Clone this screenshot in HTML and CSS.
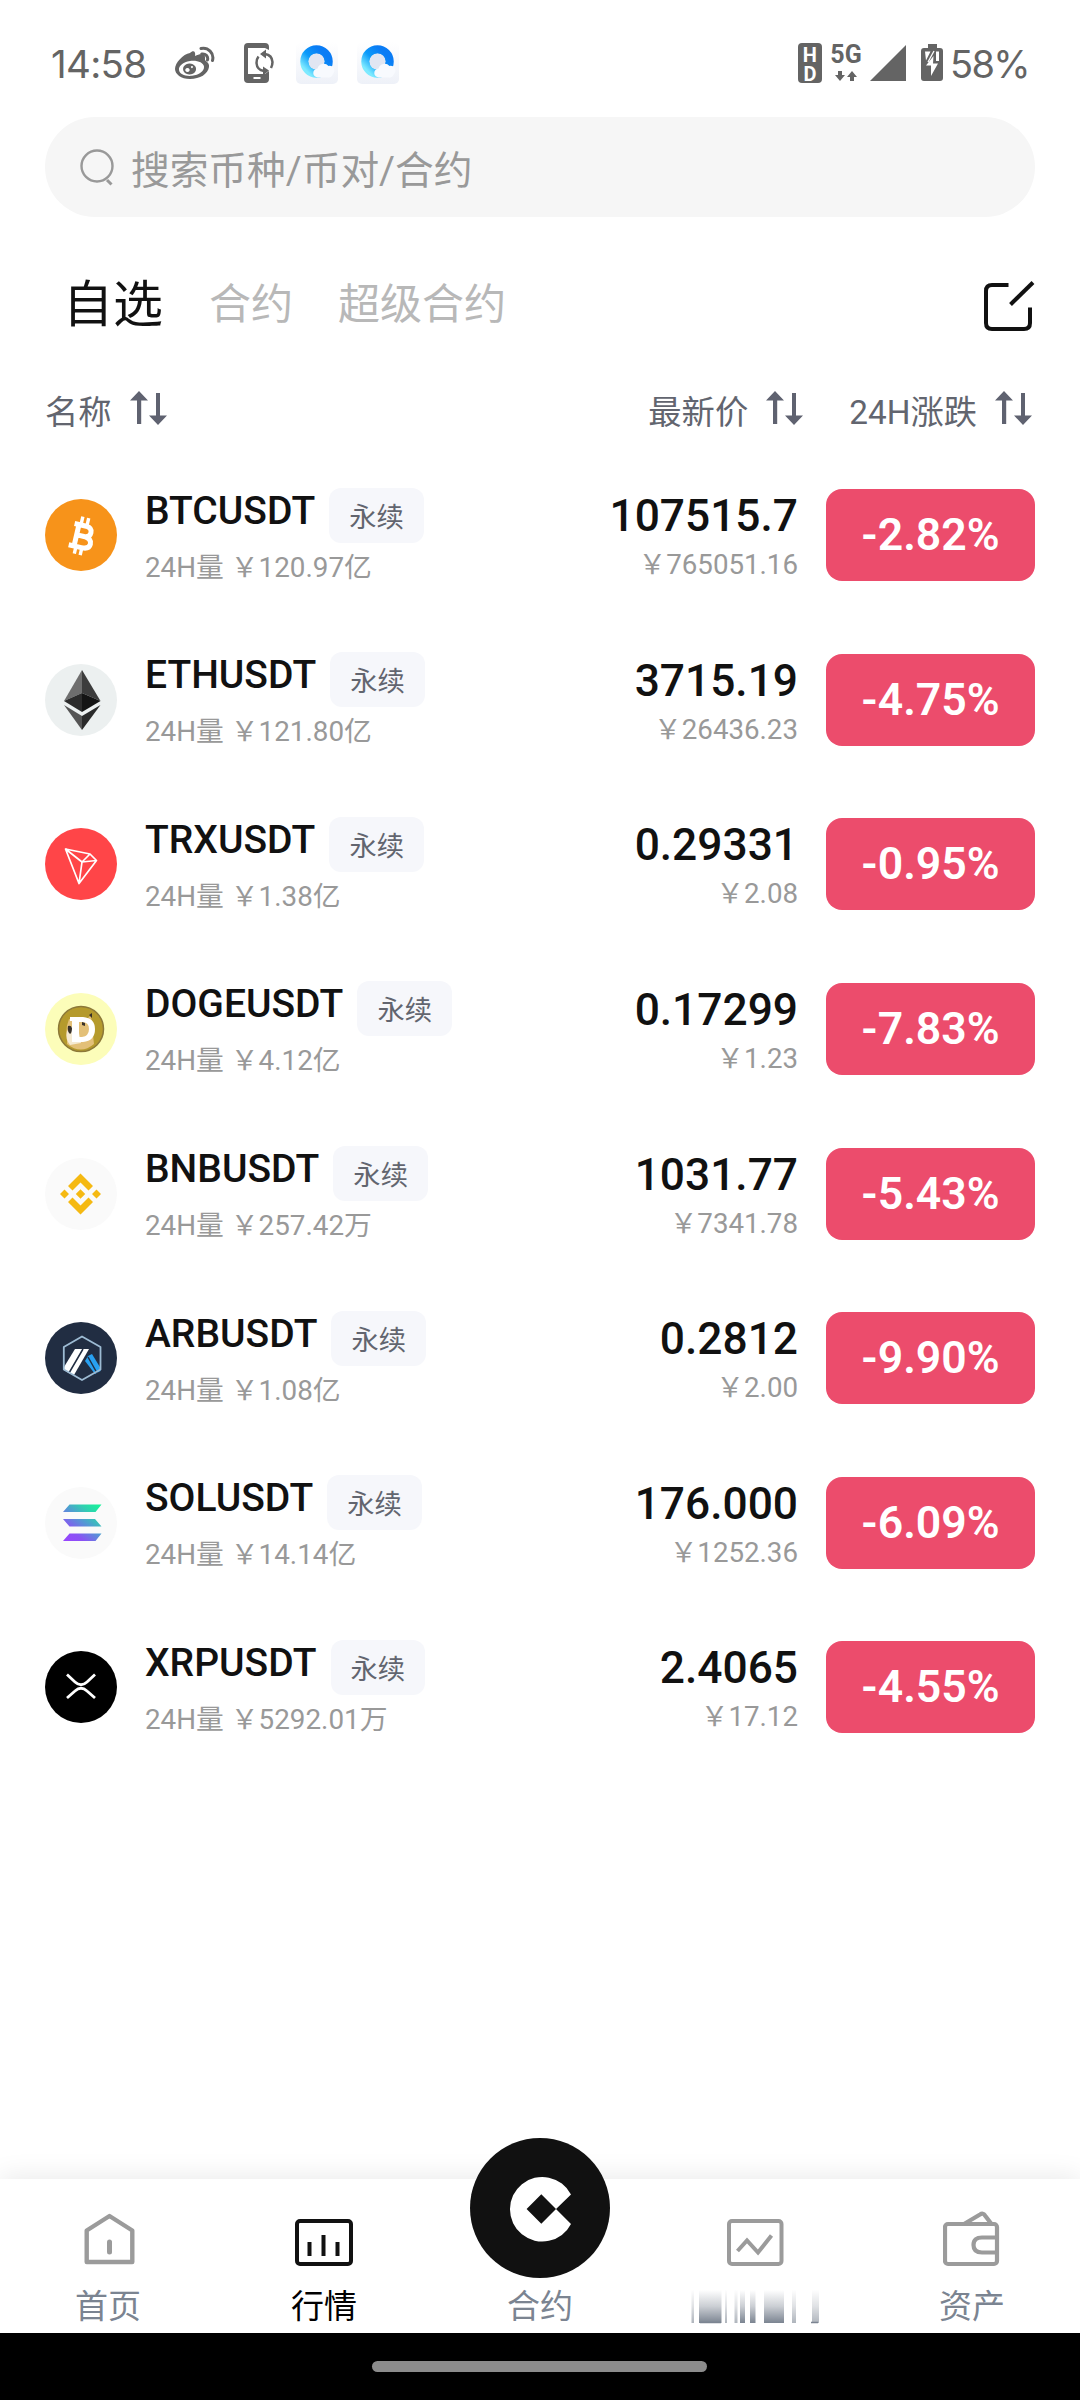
FILE: index.html
```html
<!DOCTYPE html>
<html lang="zh-CN">
<head>
<meta charset="utf-8">
<title>行情</title>
<link rel="stylesheet" href="styles.css">
</head>
<body>
<svg class="defs" width="0" height="0">
  <symbol id="sort" viewBox="0 0 37 34">
    <path fill="#5f6270" d="M9 0L18 9.5H11.2V33H7V9.500H0zM28 34L19 24.500H26V2H30V24.500H37z"/>
  </symbol>
  <symbol id="browser" viewBox="0 0 42 42">
    <rect width="42" height="42" rx="5" fill="url(#tile)"/>
    <circle cx="20.500" cy="19.500" r="12" fill="none" stroke="url(#ring)" stroke-width="8.500"/>
    <circle cx="20.500" cy="19.500" r="8" fill="#e1e6f2"/>
    <path d="M22 35.500a4.500 4.500 0 0 1-.5-9a6.500 6.500 0 0 1 11-2.500a4.800 4.800 0 0 1 4.500 8q-1.500 3.500-4.500 3.500z" fill="#f8fafe"/>
  </symbol>
  <linearGradient id="tile" x1="0" y1="0" x2="0" y2="1"><stop offset="0" stop-color="#fff"/><stop offset="1" stop-color="#eef1f8"/></linearGradient>
  <linearGradient id="ring" x1="0.800" y1="0.200" x2="0.100" y2="0.900"><stop offset="0" stop-color="#0a7cf5"/><stop offset="0.500" stop-color="#0b9bfa"/><stop offset="1" stop-color="#7eeaff"/></linearGradient>
</svg>
<div class="screen">
  <header class="status">
    <span class="clock">14:58</span>
    <svg class="weibo" width="41" height="34" viewBox="0 0 41 34">
      <path fill="#646464" fill-rule="evenodd" d="M15 7C18 4 21 5 20 10C26 7 31 8 30 13C29 15 35 16 34 21C33 28 25 33 15 33C6 33 0 28 0 23C0 17 8 8 15 7zM15 15C8 16 3.500 20 4 24C4.500 28 10 30.500 17 29.800C24 29 29.500 25 29 20.500C28.500 16.500 22 14 15 15z"/>
      <path fill="#646464" fill-rule="evenodd" d="M14.500 17.500a6.500 5.500 0 1 0 .1 0zM12.500 22a2.200 2 0 1 1-.1 0zM17 20a1 1 0 1 1-.1 0z"/>
      <path d="M26 2.500C33 1 39.500 7 37.500 14.500M26.800 8C30.500 7.500 33.500 10 32.500 14" fill="none" stroke="#646464" stroke-width="3" stroke-linecap="round"/>
    </svg>
    <svg class="rotate" width="31" height="40" viewBox="0 0 31 40">
      <path fill="#646464" d="M4 0H21Q25 0 25 4V7L21 5H4V31H21L25 28V36Q25 40 21 40H4Q0 40 0 36V4Q0 0 4 0z"/>
      <path d="M9.500 35h7" stroke="#fff" stroke-width="2"/>
      <path d="M21 11Q28 12 28.500 19Q28.500 22 27 25M20 28Q13 27 12.500 20Q12.500 16 14.500 13.500" fill="none" stroke="#646464" stroke-width="2.500"/>
      <path fill="#646464" d="M16 11L22 6.500V15.500zM25 27.500L19 23.500V32.500z"/>
    </svg>
    <svg class="browser" width="42" height="42"><use href="#browser"/></svg>
    <svg class="browser" width="42" height="42"><use href="#browser"/></svg>
    <span class="spacer"></span>
    <span class="hd">HD</span>
    <div class="net">
      <span class="net-label">5G</span>
      <svg width="22" height="10" viewBox="0 0 22 10"><path fill="#646464" d="M3 0H7V4H10L5 10L0 4H3zM15 10H19V6H22L17 0L12 6H15z"/></svg>
    </div>
    <svg class="signal" width="36" height="36" viewBox="0 0 36 36"><path fill="#646464" d="M36 0V36H0z"/></svg>
    <svg class="battery" width="22" height="37" viewBox="0 0 22 37">
      <path fill="#646464" d="M7 0H16V4H19Q22 4 22 7V34Q22 37 19 37H3Q0 37 0 34V7Q0 4 3 4H7z"/>
      <path fill="#fff" d="M4 7.500H9.500L5 16.500zM15 7.500H18V17H15zM12.500 12L5 21.500H10V32L17 19.500H12z"/>
      <path d="M13 7L7 18" stroke="#fff" stroke-width="1.300"/>
    </svg>
    <span class="charge">58%</span>
  </header>

  <div class="search">
    <svg width="35" height="37" viewBox="0 0 35 37" fill="none" stroke="#999" stroke-width="2.400"><circle cx="17" cy="17" r="15.500"/><path d="M27 31L31.500 35.500" stroke-width="3"/></svg>
    <span>搜索币种/币对/合约</span>
  </div>

  <nav class="tabs">
    <span class="tab tab-on">自选</span>
    <span class="tab">合约</span>
    <span class="tab">超级合约</span>
    <span class="spacer"></span>
    <svg class="edit" width="51" height="51" viewBox="0 0 51 51" fill="none" stroke="#111" stroke-width="4"><path d="M24.500 4H8Q2 4 2 10V42Q2 48 8 48H40Q46 48 46 42V26.500"/><path d="M26.500 23.500L49 1.500"/></svg>
  </nav>

  <div class="columns">
    <div class="col"><span>名称</span><svg width="37" height="34"><use href="#sort"/></svg></div>
    <span class="spacer"></span>
    <div class="col"><span>最新价</span><svg width="37" height="34"><use href="#sort"/></svg></div>
    <div class="col col-change"><span>24H涨跌</span><svg width="37" height="34"><use href="#sort"/></svg></div>
  </div>

  <main class="list">
    <div class="row">
      <svg class="coin" viewBox="0 0 72 72"><circle cx="36" cy="36" r="36" fill="#f7931a"/>
        <g transform="rotate(13 37 37)" fill="none" stroke="#fff"><path stroke-width="5" d="M31.500 24V51M27 26.500H39Q45 27 45 31.800Q45 36.800 39 37H32M39 37Q47 37.500 47 43Q47 48.500 39 48.500H26"/><path stroke-width="3.400" d="M33.500 18V26M39.500 18V26M33.500 48V56M39.500 48V56"/></g>
      </svg>
      <div class="info"><div class="pair"><b>BTCUSDT</b><i>永续</i></div><p>24H量 ￥120.97亿</p></div>
      <div class="price"><b>107515.7</b><p>￥765051.16</p></div>
      <div class="change">-2.82%</div>
    </div>
    <div class="row">
      <svg class="coin" viewBox="0 0 72 72"><circle cx="36" cy="36" r="36" fill="#ecf0f0"/>
        <path fill="#6e6e6e" d="M37 6L19 37L37 29z"/><path fill="#3c3c3c" d="M37 6L55.500 37L37 29z"/><path fill="#2c2c2c" d="M19 37L37 29V48z"/><path fill="#141414" d="M55.500 37L37 29V48z"/><path fill="#555" d="M19 41L37 52V66z"/><path fill="#2a2a2a" d="M55.500 41L37 52V66z"/>
      </svg>
      <div class="info"><div class="pair"><b>ETHUSDT</b><i>永续</i></div><p>24H量 ￥121.80亿</p></div>
      <div class="price"><b>3715.19</b><p>￥26436.23</p></div>
      <div class="change">-4.75%</div>
    </div>
    <div class="row">
      <svg class="coin" viewBox="0 0 72 72"><circle cx="36" cy="36" r="36" fill="#ff4548"/>
        <path fill="none" stroke="#fff" stroke-width="1.700" stroke-linejoin="round" d="M20.500 21L45 26L51.500 32.500L34 55.500zL37 34L34 55.500M37 34L51.500 32.500M37 34L45 26"/>
      </svg>
      <div class="info"><div class="pair"><b>TRXUSDT</b><i>永续</i></div><p>24H量 ￥1.38亿</p></div>
      <div class="price"><b>0.29331</b><p>￥2.08</p></div>
      <div class="change">-0.95%</div>
    </div>
    <div class="row">
      <svg class="coin" viewBox="0 0 72 72"><circle cx="36" cy="36" r="36" fill="#fcfdb9"/>
        <circle cx="36" cy="36" r="22.500" fill="#b59a2c" stroke="#8c7838" stroke-width="1.500"/>
        <path fill="#e3c078" d="M22 47Q20 36 24 26L30 28L42 26L46 22L48 42L49 51Q36 62 22 51z"/>
        <path fill="#f5ead2" d="M22 38Q30 31 34 40L36 50L25 52Q20 46 22 38z"/>
        <path fill="#fff" fill-rule="evenodd" d="M25 24H38Q50 25 50 36Q50 48 38 49H27V39H24V34H27V28H25zM34 29V44H37Q44 43 44 36Q44 29 37 29z"/>
        <path fill="#e3c078" d="M37 30Q43 31 43 36Q43 42 37 43z"/>
        <path fill="#383129" d="M23 33Q26 32 27 35Q27 40 25 41Q22 39 23 33zM37 29l3 1v3l-3-1zM44 22l3-2v5z"/>
      </svg>
      <div class="info"><div class="pair"><b>DOGEUSDT</b><i>永续</i></div><p>24H量 ￥4.12亿</p></div>
      <div class="price"><b>0.17299</b><p>￥1.23</p></div>
      <div class="change">-7.83%</div>
    </div>
    <div class="row">
      <svg class="coin" viewBox="0 0 72 72"><circle cx="36" cy="36" r="36" fill="#fafafa"/>
        <path fill="#f5b912" d="M35.500 15.500L48 28L43.500 32.500L35.500 24.500L27.500 32.500L23 28zM35.500 56.500L48 44L43.500 39.500L35.500 47.500L27.500 39.500L23 44zM35.500 31.300L40.200 36L35.500 40.700L30.800 36zM19.500 31.500L24 36L19.500 40.500L15 36zM51.500 31.500L56 36L51.500 40.500L47 36z"/>
      </svg>
      <div class="info"><div class="pair"><b>BNBUSDT</b><i>永续</i></div><p>24H量 ￥257.42万</p></div>
      <div class="price"><b>1031.77</b><p>￥7341.78</p></div>
      <div class="change">-5.43%</div>
    </div>
    <div class="row">
      <svg class="coin" viewBox="0 0 72 72"><circle cx="36" cy="36" r="36" fill="#212d42"/>
        <path fill="#28a0f0" d="M43 34L47 32L55.500 46V49L50 52L40 39z"/>
        <path fill="#fff" d="M30 27H44L29 53L24.500 51.500L19 48V45z"/>
        <path d="M38 27L24 51M43 35L52 51" stroke="#212d42" stroke-width="1.500"/>
        <path fill="none" stroke="#9dbbd3" stroke-width="1.800" stroke-linejoin="round" d="M37 14.500L55.500 25V47.500L37 58L18.800 47.500V25z"/>
      </svg>
      <div class="info"><div class="pair"><b>ARBUSDT</b><i>永续</i></div><p>24H量 ￥1.08亿</p></div>
      <div class="price"><b>0.2812</b><p>￥2.00</p></div>
      <div class="change">-9.90%</div>
    </div>
    <div class="row">
      <svg class="coin" viewBox="0 0 72 72"><circle cx="36" cy="36" r="36" fill="#fafafa"/>
        <linearGradient id="sol" gradientUnits="userSpaceOnUse" x1="22" y1="56" x2="52" y2="18"><stop offset="0" stop-color="#9945ff"/><stop offset="0.250" stop-color="#8a52f4"/><stop offset="0.550" stop-color="#5497d5"/><stop offset="0.800" stop-color="#2fd0b0"/><stop offset="1" stop-color="#19f09b"/></linearGradient>
        <path fill="url(#sol)" d="M24.500 17.500H56.500L50.500 25H18zM18 32H50L56.500 39.500H24.500zM24.500 46.500H56.500L50.500 54H18z"/>
      </svg>
      <div class="info"><div class="pair"><b>SOLUSDT</b><i>永续</i></div><p>24H量 ￥14.14亿</p></div>
      <div class="price"><b>176.000</b><p>￥1252.36</p></div>
      <div class="change">-6.09%</div>
    </div>
    <div class="row">
      <svg class="coin" viewBox="0 0 72 72"><circle cx="36" cy="36" r="36" fill="#000"/>
        <path fill="none" stroke="#fff" stroke-width="2.800" d="M22 23.500L30 31Q36 36.500 42 31L50 23.500M22 47L30 40Q36 34.500 42 40L50 47"/>
      </svg>
      <div class="info"><div class="pair"><b>XRPUSDT</b><i>永续</i></div><p>24H量 ￥5292.01万</p></div>
      <div class="price"><b>2.4065</b><p>￥17.12</p></div>
      <div class="change">-4.55%</div>
    </div>
  </main>

  <footer class="tabbar">
    <div class="item">
      <svg width="58" height="60" viewBox="0 0 58 60" fill="none" stroke="#9b9b9b" stroke-width="4.400" stroke-linejoin="round"><path d="M7.700 20.500L30.500 6L53.300 20.500V52H7.700z"/><path d="M30.500 32V42" stroke-width="5" stroke-linecap="round"/></svg>
      <span>首页</span>
    </div>
    <div class="item item-on">
      <svg width="58" height="60" viewBox="0 0 58 60" fill="none" stroke="#111" stroke-width="4"><rect x="2" y="11" width="54" height="43" rx="3"/><path d="M14.500 32V46M28.500 25V46M42.500 32V46"/></svg>
      <span>行情</span>
    </div>
    <div class="item item-main">
      <svg width="140" height="140" viewBox="0 0 140 140"><circle cx="70" cy="70" r="70" fill="#111"/>
        <path fill="#fff" fill-rule="evenodd" d="M101 56.500A32.300 32.300 0 1 0 101 86L86 71zM71.300 56.300L86 71L71.300 85.700L56.600 71z"/>
      </svg>
      <span>合约</span>
    </div>
    <div class="item">
      <svg width="58" height="60" viewBox="0 0 58 60" fill="none" stroke="#9b9b9b" stroke-width="4"><rect x="2" y="11" width="52.500" height="43" rx="3"/><path d="M10.500 41L20 30.500L31 42.500L44.500 25.500"/></svg>
      <svg class="smear" width="132" height="48" viewBox="0 0 132 48">
        <linearGradient id="fade" x1="0" y1="0" x2="0" y2="1"><stop offset="0" stop-color="#7b8491" stop-opacity="0"/><stop offset="0.500" stop-color="#7b8491" stop-opacity=".4"/><stop offset="1" stop-color="#7b8491"/></linearGradient>
        <g fill="url(#fade)"><rect x="9" y="8" width="22.500" height="33"/><rect x="74" y="8" width="20" height="33"/><rect x="50" y="8" width="5" height="33"/><rect x="60" y="8" width="5.500" height="33"/></g>
        <g fill="url(#fade)" opacity=".6"><rect x="1.500" y="8" width="2.500" height="33"/><rect x="35" y="8" width="2" height="33"/><rect x="44.500" y="8" width="3" height="33"/><rect x="102" y="8" width="4" height="33"/><rect x="122" y="8" width="7" height="33"/></g>
        <path d="M10 40.500H31M121 40.500H128" stroke="#7b8491" stroke-width="1.500"/>
      </svg>
    </div>
    <div class="item">
      <svg width="58" height="60" viewBox="0 0 58 60" fill="none" stroke="#9b9b9b" stroke-width="4.200"><rect x="2" y="14" width="52" height="40" rx="3"/><path d="M21 14L37 4.500Q40 2.500 42 5.500L48.500 14M54 27.500H39Q30.500 27.500 30.500 35Q30.500 42.500 39 42.500H54"/></svg>
      <span>资产</span>
    </div>
  </footer>
  <div class="gesture"><div class="pill"></div></div>
</div>
</body>
</html>
```
FILE: styles.css
```css
* { box-sizing: border-box; }
body { margin: 0; background: #fff; font-family: Roboto, "Noto Sans CJK SC", sans-serif; color: #111; }
p { margin: 0; }
b { font-weight: 500; }
i { font-style: normal; }
svg { display: block; flex: none; }
.defs { position: absolute; }
.screen { width: 1080px; height: 2400px; display: flex; flex-direction: column; overflow: hidden; }
.spacer { flex: 1; }

.status { height: 117px; padding: 8px 53px 0 51px; display: flex; align-items: center; color: #646464; font-family: Inter, sans-serif; }
.clock { width: 124px; font-size: 38.500px; line-height: 46px; letter-spacing: -0.700px; padding-top: 2px; white-space: nowrap; }
.rotate { margin-left: 28px; }
.browser { margin-left: 21px; }
.browser + .browser { margin-left: 19px; }
.hd { width: 24px; height: 40px; padding-top: 0; border-radius: 4px; background: #646464; color: #fff; font: 700 20px/24px Roboto, sans-serif; writing-mode: vertical-rl; text-orientation: upright; letter-spacing: -5.500px; white-space: nowrap; }
.net { width: 32px; height: 36px; margin-left: 8px; display: flex; flex-direction: column; align-items: center; justify-content: space-between; }
.net-label { font: 700 25px/19px Roboto, sans-serif; }
.signal { margin-left: 8px; }
.battery { margin-left: 15px; }
.charge { width: 77px; margin-left: 7px; font-size: 38px; line-height: 46px; letter-spacing: -1.700px; padding-top: 2px; white-space: nowrap; }

.search { height: 100px; margin: 0 45px; padding-left: 35px; border-radius: 50px; background: #f6f6f6; display: flex; align-items: center; gap: 16px; font-size: 38.700px; color: #999; }

.tabs { height: 118px; margin-top: 24px; padding: 0 45px 0 63px; display: flex; align-items: center; }
.tab { font-size: 42px; color: #b8b8b8; margin-right: 45px; }
.tab-on { font-size: 50px; color: #111; margin-right: 46px; }
.edit { margin-top: 12px; }

.columns { height: 60px; margin-top: 19px; padding: 0 48px 0 45px; display: flex; align-items: center; font-size: 33.300px; color: #62656f; }
.col { display: flex; align-items: center; gap: 18px; }
.col span { padding-top: 2px; }
.col-change { margin-left: 46px; }

.list { margin-top: 15px; }
.row { height: 164.570px; padding: 0 45px; display: flex; align-items: center; }
.coin { width: 72px; height: 72px; }
.info { flex: 1; margin-left: 28px; }
.pair { display: flex; align-items: center; height: 55px; }
.pair b { font-size: 39px; line-height: 46px; margin-bottom: 9px; }
.pair i { margin-left: 14px; padding: 0 20px; height: 55px; line-height: 61px; border-radius: 12px; background: #f6f7fb; color: #62656f; font-size: 27.300px; }
.info p { font-size: 27.800px; line-height: 34px; margin: 8px 0 -2px; color: #999; }
.price { text-align: right; }
.price b { display: block; font-size: 44.300px; line-height: 52px; margin-top: 2px; }
.price p { font-size: 27.700px; line-height: 36px; margin: 5px 0 -1px; color: #999; }
.change { width: 209px; height: 92px; margin-left: 28px; border-radius: 16px; background: #ec4c6c; color: #fff; font-size: 44.600px; font-weight: 600; line-height: 92px; text-align: center; }

.tabbar { margin-top: auto; height: 154px; display: flex; background: #fff; box-shadow: 0 -4px 24px rgba(0, 0, 0, .08); }
.item { flex: 1; display: flex; flex-direction: column; align-items: center; padding-top: 31px; font-size: 33px; line-height: 48px; color: #7b8491; }
.item span { margin-top: 13px; }
.item-on { color: #000; }
.item-main { padding-top: 0; }
.item-main svg { margin-top: -41px; }
.item-main span { margin-top: 5px; }
.smear { margin-top: 12px; }
.gesture { height: 67px; background: #000; display: flex; justify-content: center; padding: 28px 1px 0 0; }
.pill { width: 335px; height: 11px; border-radius: 6px; background: #8c8c8c; }
```
